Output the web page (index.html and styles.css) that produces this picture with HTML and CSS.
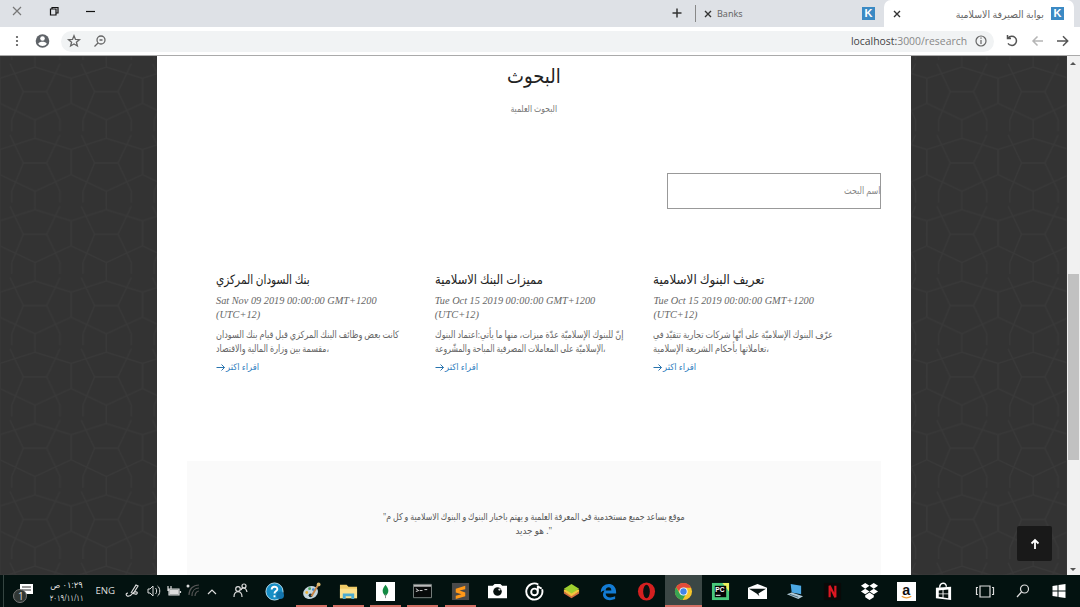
FILE: index.html
```html
<!DOCTYPE html>
<html lang="ar">
<head>
<meta charset="utf-8">
<title>بوابة الصيرفة الاسلامية</title>
<link rel="stylesheet" href="styles.css">
</head>
<body>
<header class="tabs">
  <div class="window-buttons">
    <svg width="100" height="27" fill="none" stroke="#333" stroke-width="1.2"><path d="M13 7l8 8M21 7l-8 8" stroke="#777"/><path d="M50.500 9h5.500v6h-5.500zM52 9V7.500h6V13h-2" stroke="#111"/><path d="M86 11.500h9" stroke="#111"/></svg>
  </div>
  <div class="new-tab"><svg width="12" height="12" stroke="#333" stroke-width="1.5"><path d="M1.500 6h9M6 1.500v9"/></svg></div>
  <div class="tab"><svg class="close" width="8" height="8" stroke="#333" stroke-width="1.4"><path d="M1 1l6 6M7 1L1 7"/></svg><span class="tab-name">Banks</span><span class="favicon">K</span></div>
  <div class="tab tab-active"><svg class="close" width="8" height="8" stroke="#333" stroke-width="1.4"><path d="M1 1l6 6M7 1L1 7"/></svg><span class="tab-title" dir="rtl">بوابة الصيرفة الاسلامية</span><span class="favicon">K</span></div>
</header>
<nav class="toolbar">
  <svg class="menu" width="61" height="28"><g fill="#555"><circle cx="17" cy="10" r="1.100"/><circle cx="17" cy="14" r="1.100"/><circle cx="17" cy="18" r="1.100"/></g><circle cx="42.500" cy="14" r="6.800" fill="#5f6368"/><circle cx="42.500" cy="11.500" r="2.300" fill="#fff"/><path d="M38.200 16.800c1.500-2.600 7-2.600 8.600 0-2 2.900-6.500 2.900-8.600 0z" fill="#fff"/></svg>
  <div class="address">
    <svg width="60" height="22" fill="none" stroke="#666" stroke-width="1.300"><path d="M13 5.800l1.500 3.600 3.900.3-3 2.500 1 3.800-3.400-2-3.400 2 1-3.800-3-2.500 3.900-.3z"/><circle cx="40" cy="10" r="4"/><path d="M37 13l-3.500 3.500M38.500 10h3" /></svg>
    <div class="url"><span>localhost:</span>3000/research</div>
    <svg width="22" height="22" fill="none" stroke="#666" stroke-width="1.200"><circle cx="9" cy="11" r="5"/><path d="M9 10v4M9 7.500v1.300"/></svg>
  </div>
  <svg class="nav-buttons" width="86" height="28" fill="none" stroke="#555" stroke-width="1.500"><path d="M14.200 11a4.600 4.600 0 1 1-.2 5.300M13.500 8v3.500H17"/><path d="M49 14H39M43.500 9.500L39 14l4.500 4.500" stroke="#b5b5b5"/><path d="M63 14h10.500M69 9.300l4.700 4.700-4.700 4.700"/></svg>
</nav>
<main class="viewport">
  <svg class="pattern" width="1067" height="519"><defs><pattern id="lattice" width="71.300" height="71.300" patternUnits="userSpaceOnUse" patternTransform="translate(0 4)"><path d="M23.300 31.700h23.400M71 18.300v25M35 60v18.300M35-11.300V7M35 7l36 11.300M35 7L0 18.300M71 43.300L35 60 0 43.300M0 18.300v25M23.300 31.700L11.700 60v15M46.700 31.700L60 60v15M23.300 31.700L10 3.700M46.700 31.700L60 3.700"/></pattern></defs><rect width="1067" height="519" fill="url(#lattice)"/></svg>
  <div class="page">
    <h1 class="heading"><span class="fit f-heading">البحوث</span></h1>
    <p class="sub"><span class="fit f-sub">البحوث العلمية</span></p>
    <div class="search" dir="rtl"><span class="fit f-search">اسم البحث</span></div>
    <section class="cards">
      <article class="card">
        <h2><span class="fit f-c1">بنك السودان المركزي</span></h2>
        <div class="date">Sat Nov 09 2019 00:00:00 GMT+1200<br>(UTC+12)</div>
        <p><span class="fit f-c1a">كانت بعض وظائف البنك المركزي قبل قيام بنك السودان</span><br><span class="fit f-c1b">مقسمة بين وزارة المالية والاقتصاد،</span></p>
        <a class="more"><svg width="10" height="9"><path d="M.500 4.500h8M5.500 1.500l3 3-3 3"/></svg><span class="fit f-more">اقراء اكثر</span></a>
      </article>
      <article class="card">
        <h2><span class="fit f-c2">مميزات البنك الاسلامية</span></h2>
        <div class="date">Tue Oct 15 2019 00:00:00 GMT+1200<br>(UTC+12)</div>
        <p><span class="fit f-c2a">إنّ للبنوك الإسلاميّة عدّة ميزات، منها ما يأتي:اعتماد البنوك</span><br><span class="fit f-c2b">الإسلاميّة على المعاملات المصرفية المباحة والمشّروعة،</span></p>
        <a class="more"><svg width="10" height="9"><path d="M.500 4.500h8M5.500 1.500l3 3-3 3"/></svg><span class="fit f-more">اقراء اكثر</span></a>
      </article>
      <article class="card">
        <h2><span class="fit f-c3">تعريف البنوك الاسلامية</span></h2>
        <div class="date">Tue Oct 15 2019 00:00:00 GMT+1200<br>(UTC+12)</div>
        <p><span class="fit f-c3a">عرّف البنوك الإسلاميّة على أنّها شركات تجارية تتقيّد في</span><br><span class="fit f-c3b">تعاملاتها بأحكام الشريعة الإسلامية،</span></p>
        <a class="more"><svg width="10" height="9"><path d="M.500 4.500h8M5.500 1.500l3 3-3 3"/></svg><span class="fit f-more">اقراء اكثر</span></a>
      </article>
    </section>
    <footer class="quote"><span class="fit f-q1">"موقع يساعد جميع مستخدمية في المعرفة العلمية و يهتم باخبار البنوك و البنوك الاسلامية و كل م</span><span class="fit f-q2">هو جديد ."</span></footer>
  </div>
  <div class="scrollbar"><i class="up"></i><div class="thumb"></div><i class="down"></i></div>
  <div class="to-top"><svg width="12" height="12" fill="none" stroke="#fff" stroke-width="1.800"><path d="M6 11V2M2.500 5.500L6 2l3.500 3.500"/></svg></div>
</main>
<footer class="taskbar">
  <div class="tray">
    <svg width="42" height="32"><path d="M3.500 0v32" stroke="#354541"/><path d="M20 9h13v10h-6l-3 3v-3h-4z" fill="#fff"/><path d="M22 12h9M22 15h9" stroke="#333"/><circle cx="20" cy="21" r="6.500" fill="#303735" stroke="#777"/><text x="18" y="25" fill="#ddd" class="badge">1</text></svg>
    <div class="clock"><span class="fit f-time" dir="rtl">٠١:٢٩ ص</span><span class="fit f-date">٢٠١٩/١١/١١</span></div>
    <span class="lang">ENG</span>
    <svg width="134" height="32" fill="none" stroke="#ddd" stroke-width="1.200"><path d="M6 18c-3 0-2 4 1 3 3 0 3-4 6-4 3-1 3 3 0 2l-3-1M9 18l5-8 2 1-5 8"/><path d="M26 14h2l3-3v10l-3-3h-2zM33.500 13c1.500 1 1.500 5 0 6M35.500 11c3 2 3 8 0 10" stroke-width="1"/><path d="M47 14h10v6H47zM58.500 16v2M46 11v5M49 11v3" /><path d="M48 15h8v4h-8z" fill="#ddd"/><path d="M67 20c0-6 4-10 10-10M70 21c0-5 3-8 7-8M73 21c0-3 2-5 4-5" stroke="#555"/><circle cx="66" cy="11" r="1.500" fill="#ddd" stroke="none"/><path d="M86 19l4-4 4 4"/><circle cx="116" cy="14" r="2.300"/><path d="M112 22c0-7 8-7 8 0M119 15c1-3 5-3 6 2"/><circle cx="122" cy="11" r="2"/></svg>
  </div>
  <div class="apps">
    <div class="app"><svg viewBox="0 0 20 20"><circle cx="10" cy="10" r="9" fill="#188fc6" stroke="#bce5f6"/><path d="M7 8c0-4 6-4 6-.500 0 2-3 2-3 4.500M10 14v2" fill="none" stroke="#fff" stroke-width="2"/><circle cx="16" cy="14" r="4" fill="#1475ad"/></svg></div>
    <div class="app open"><svg viewBox="0 0 20 20"><ellipse cx="9" cy="11" rx="8" ry="6.500" fill="#c4d5dd" transform="rotate(-25 9 11)"/><circle cx="5" cy="11" r="1.500" fill="#e8b33a"/><circle cx="8" cy="7" r="1.500" fill="#49a15c"/><circle cx="12" cy="8" r="1.500" fill="#4387cc"/><circle cx="9" cy="14" r="2" fill="#142e36"/><path d="M10 15L17 3" stroke="#c78548" stroke-width="2"/><circle cx="17.500" cy="2.500" r="2" fill="#d9b66e"/></svg></div>
    <div class="app open"><svg viewBox="0 0 20 20"><path d="M1 3h7l2 2h9v12H1z" fill="#efca66"/><path d="M1 7h18v10H1z" fill="#fbdf8b"/><path d="M4 18v-6h12v6h-3v-3H7v3z" fill="#4cabd1"/></svg></div>
    <div class="app open"><svg viewBox="0 0 20 20"><path d="M0 0h20v20H0z" fill="#fff"/><path d="M10 3c-4 5-4 8 0 12 4-4 4-7 0-12z" fill="#138b43"/><path d="M10 13v4" stroke="#888"/></svg></div>
    <div class="app open"><svg viewBox="0 0 20 20"><path d="M.500 2.500h19v14H.500z" fill="#070a0a" stroke="#7c8583"/><path d="M1 4h18" stroke="#bbb" stroke-width="2"/><path d="M3 7l3 2-3 1M7 9h3M12 8h3" stroke="#ddd" fill="none"/></svg></div>
    <div class="app open"><svg viewBox="0 0 20 20"><path d="M1 1h18v18H1z" fill="#4a4a4a"/><path d="M15 4L5 7v4l6 2-6 1.500V18l10-3v-4L9 9l6-1.500z" fill="#ff9818"/></svg></div>
    <div class="app"><svg viewBox="0 0 20 20"><path d="M0 4h5l2-2h6l2 2h5v13H0z" fill="#fff"/><circle cx="10" cy="10" r="4.500" fill="#07110f"/><circle cx="12" cy="8" r="1.200" fill="#ddd"/></svg></div>
    <div class="app"><svg viewBox="0 0 20 20" fill="none" stroke="#fff" stroke-width="2"><path d="M14 2.600a8.500 8.500 0 1 0 4 5"/><circle cx="10" cy="10.500" r="3.500"/><path d="M13.500 10V4c1 2 3 2 4 3"/></svg></div>
    <div class="app"><svg viewBox="0 0 20 20"><path d="M2 12l8 5 8-5v-2l-8 4-8-4z" fill="#d46e40"/><path d="M2 10l8 5 8-5V8H2z" fill="#f4c33d"/><path d="M2 7l8-5 8 5-8 5z" fill="#9dcf2f"/></svg></div>
    <div class="app"><svg viewBox="0 0 20 20"><path d="M2 11C1 0 19-2 18 12H7c0 5 6 5 10 3v3C7 22 1 15 6 9c-2 0-3 1-4 2zm5-2h6c0-5-6-4-6 0z" fill="#137bd3"/></svg></div>
    <div class="app"><svg viewBox="0 0 20 20"><ellipse cx="10" cy="10" rx="9" ry="9.500" fill="#d42020"/><ellipse cx="10" cy="10" rx="3.500" ry="7" fill="#071211"/></svg></div>
    <div class="app open current"><svg viewBox="0 0 20 20"><circle cx="10" cy="10" r="9" fill="#f6c52b"/><path d="M2.200 5.500A9 9 0 0 1 18 6h-8L7 12z" fill="#e24a3b"/><path d="M2.200 5.500A9 9 0 0 0 9 19l4-7H6z" fill="#38a353"/><circle cx="10" cy="10" r="4.300" fill="#fff"/><circle cx="10" cy="10" r="3.400" fill="#4285e8"/></svg></div>
    <div class="app"><svg viewBox="0 0 20 20"><path d="M1 1h18v18H1z" fill="#48c97b"/><path d="M12 1h7v9z" fill="#eef35d"/><path d="M4 4h12v12H4z" fill="#050505"/><text x="4.500" y="11" fill="#fff" class="pc">PC</text><path d="M5 14h5" stroke="#fff"/></svg></div>
    <div class="app"><svg viewBox="0 0 20 20"><path d="M0 6l10-4 10 4v12H0z" fill="#fff"/><path d="M1 7h18l-8 5 1 3-3-3z" fill="#091513"/></svg></div>
    <div class="app"><svg viewBox="0 0 20 20"><path d="M6 2l11 2v9L7 11z" fill="#4da9e4"/><path d="M2 13l5-2 12 4-5 3z" fill="#b3cbd7"/><path d="M5 13l9 3" stroke="#45697c"/></svg></div>
    <div class="app"><svg viewBox="0 0 20 20"><path d="M1 1h18v18H1z" fill="#0a0908"/><path d="M7 16V4l6 12V4" fill="none" stroke="#df1722" stroke-width="2.300"/></svg></div>
    <div class="app"><svg viewBox="0 0 20 20" fill="#fff"><path d="M5.500 1l4.500 3-4.500 3L1 4zM14.500 1L19 4l-4.500 3L10 4zM1 10l4.500-3 4.500 3-4.500 3zM19 10l-4.500-3-4.500 3 4.500 3zM5.500 14l4.500-3 4.500 3v2L10 19l-4.500-3z"/></svg></div>
    <div class="app"><svg viewBox="0 0 20 20"><path d="M0 0h20v20H0z" fill="#fff"/><text x="5.500" y="13.500" class="amazon">a</text><path d="M5 15c3 2 7 2 10 0" fill="none" stroke="#ef9d39" stroke-width="1.200"/></svg></div>
    <div class="app"><svg viewBox="0 0 20 20"><path d="M2 6l16-1v14L2 17z" fill="#fff"/><path d="M6 6c0-6 7-6 7-1" fill="none" stroke="#fff" stroke-width="1.500"/><path d="M5 9l4-.5V12H5zM10 8.300l5-.500V12h-5zM5 13h4v3l-4-.5zM10 13h5v4l-5-.7z" fill="#07120f"/></svg></div>
  </div>
  <div class="system">
    <svg width="20" height="18" fill="none" stroke="#ddd" stroke-width="1.200"><path d="M5 4h10v11H5zM3 5.500H1.500v7H3M17 5.500h1.500v7H17"/></svg>
    <svg width="16" height="16" fill="none" stroke="#ddd" stroke-width="1.200"><circle cx="9.500" cy="6" r="4"/><path d="M6.500 9L2 14"/></svg>
    <svg width="16" height="16" fill="#fff"><path d="M1.500 3l5-.8v5.300h-5zM7.500 2l7-1v6.500h-7zM1.500 8.500h5v5.300l-5-.8zM7.500 8.500h7V15l-7-1z"/></svg>
  </div>
</footer>
</body>
</html>
```
FILE: styles.css
```css
* { box-sizing: border-box; }
body { margin: 0; width: 1080px; height: 607px; overflow: hidden; display: grid; grid-template-rows: 27px 29px 519px 32px; font-family: "Liberation Serif", "DejaVu Sans", serif; background: #fff; }
svg { display: block; flex: none; }
h1, h2, p { margin: 0; font-weight: 400; }
.tabs { display: flex; background: #dee1e6; font-family: "Noto Sans", "DejaVu Sans", sans-serif; }
.window-buttons { width: 671px; }
.new-tab { width: 24px; padding-top: 7px; }
.tab { display: flex; align-items: center; width: 189px; padding: 0 9px 0 8px; font-size: 9px; color: #666; }
.tab::before { content: ""; width: 1px; height: 17px; background: #888; margin-left: -8px; margin-right: 8px; }
.tab-active { width: 190px; background: #fff; border-radius: 7px 7px 0 0; margin-right: 6px; padding-right: 10px; }
.tab-active::before { visibility: hidden; }
.tab-name { margin-left: 5px; }
.favicon { margin-left: auto; width: 13px; height: 13px; background: #3b8ac4; color: #fff; font: bold 11px/13px "Liberation Sans", sans-serif; text-align: center; }
.tab-title { margin-left: auto; font-size: 10px; white-space: nowrap; transform: scaleX(.94); transform-origin: right center; }
.tab-title + .favicon { margin-left: 7px; }
.toolbar { display: flex; align-items: center; background: #fff; border-bottom: 1px solid #aaa; }
.address { width: 933px; height: 21px; border-radius: 11px; background: #f1f3f4; display: flex; align-items: center; }
.url { margin-left: auto; margin-right: 5px; font: 10.4px "Open Sans", sans-serif; color: #888; }
.url span { color: #444; }
.viewport { display: flex; position: relative; background: #333; overflow: hidden; }
.pattern { position: absolute; left: 0; top: 0; fill: none; stroke: #393939; stroke-width: 1.3; }
.page { width: 754px; margin-left: 157px; height: 519px; background: #fff; position: relative; display: flex; flex-direction: column; align-items: stretch; padding: 0 30px; }
.fit { display: inline-block; white-space: nowrap; transform-origin: left center; }
.heading { height: 41px; text-align: center; font-size: 20px; line-height: 40px; color: #222; }
.heading .fit, .sub .fit, .quote .fit, .clock .fit { transform-origin: center; }
.f-heading { transform: scaleX(.9); }
.sub { height: 24px; text-align: center; font-size: 9.5px; line-height: 24px; color: #777; }
.f-sub { transform: scaleX(.81); }
.search { width: 214px; height: 36px; margin-top: 52px; align-self: flex-end; border: 1px solid #999; font-size: 10px; line-height: 33px; color: #888; }
.search .fit { transform: scaleX(.8); transform-origin: right center; }
.cards { height: 252px; padding: 62px 7px 0 29px; display: grid; grid-template-columns: repeat(3, 218.7px); }
.card { min-width: 0; }
.card h2 { height: 22px; font-size: 13px; line-height: 18px; color: #222; }
.f-c1 { transform: scaleX(.81); }
.f-c2 { transform: scaleX(.885); }
.f-c3 { transform: scaleX(.92); }
.date { font-size: 10.3px; line-height: 13.5px; font-style: italic; color: #666; height: 28px; white-space: nowrap; padding-top: 1px; }
.card p { height: 30px; margin-top: 7px; font-size: 10px; line-height: 13.5px; color: #666; }
.card p .fit { height: 13.5px; vertical-align: top; }
.f-c1a { transform: scaleX(.81); }
.f-c1b { transform: scaleX(.79); }
.f-c2a { transform: scaleX(.81); }
.f-c2b { transform: scaleX(.757); }
.f-c3a { transform: scaleX(.806); }
.f-c3b { transform: scaleX(.83); }
.more { display: flex; align-items: center; height: 14px; margin-top: 2px; color: #337fc0; font-size: 9px; }
.f-more { transform: scaleX(.94); }
.more svg { stroke: #2a74ae; fill: none; }
.quote { height: 114px; background: #fafafa; display: flex; flex-direction: column; align-items: center; padding-top: 49px; font-size: 9.5px; line-height: 14px; color: #555; }
.f-q1 { transform: scaleX(.82); }
.f-q2 { transform: scaleX(.93); }
.scrollbar { width: 13px; margin-left: auto; background: #f1f1f1; position: relative; padding-top: 218px; }
.thumb { width: 11px; height: 186px; margin: 0 1px; background: #c1c1c1; }
.up, .down { position: absolute; left: 3px; border: 3.500px solid transparent; }
.up { top: 3px; border-bottom-color: #555; }
.down { bottom: 1px; border-top-color: #555; }
.to-top { position: absolute; left: 1017px; top: 470px; width: 35px; height: 35px; border-radius: 2px; background: #191919; display: grid; place-items: center; }
.taskbar { display: flex; background: #031210; color: #ddd; font-family: "Open Sans", "DejaVu Sans", sans-serif; }
.tray { width: 255.6px; display: flex; }
.badge { font-size: 10px; }
.clock { width: 51px; display: flex; flex-direction: column; align-items: center; font-size: 9px; line-height: 13px; padding-top: 3px; }
.f-time { transform: scaleX(.93); }
.f-date { transform: scaleX(.75); }
.lang { width: 31px; padding-left: 4px; font-size: 9.7px; line-height: 32px; }
.apps { display: flex; }
.app { width: 37.2px; height: 32px; display: grid; place-items: center; }
.app svg { width: 19px; height: 19px; }
.open { background: linear-gradient(#d36f64, #d36f64) center bottom / 31px 2px no-repeat; }
.current { background-color: #3b4745; background-size: 37px 2px; }
.pc { font: bold 7px "Liberation Sans", sans-serif; }
.amazon { font: bold 15px "Liberation Sans", sans-serif; fill: #111; }
.system { display: flex; align-items: center; gap: 20px; padding-left: 13px; }
```
